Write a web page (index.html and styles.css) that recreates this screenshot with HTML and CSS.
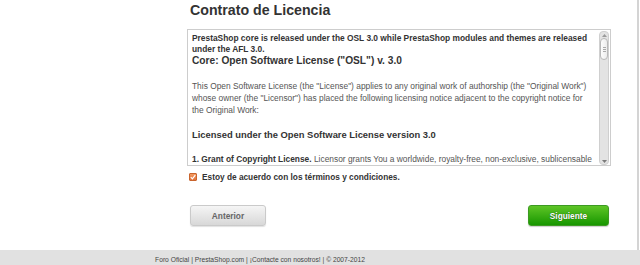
FILE: index.html
```html
<!DOCTYPE html>
<html>
<head>
    <title>Contrato de Licencia</title>
    <link rel="stylesheet" href="styles.css">
</head>
<body>
    <div class="page">
        <div class="content">
            <h2 class="title">Contrato de Licencia</h2>

            <!-- License text with its scrollbar -->
            <div class="license-box">
                <div class="license-text">
                    <div class="intro">PrestaShop core is released under the OSL 3.0 while PrestaShop modules and themes are released under the AFL 3.0.</div>
                    <h1>Core: Open Software License ("OSL") v. 3.0</h1>
                    <p>This Open Software License (the "License") applies to any original work of authorship (the "Original Work") whose owner (the "Licensor") has placed the following licensing notice adjacent to the copyright notice for the Original Work:</p>
                    <h3>Licensed under the Open Software License version 3.0</h3>
                    <p class="grant"><strong>1. Grant of Copyright License.</strong> Licensor grants You a worldwide, royalty-free, non-exclusive, sublicensable license, for the duration of the copyright, to do the following:</p>
                </div>
                <div class="scrollbar">
                    <div class="scroll-btn">
                        <svg width="5" height="3" viewBox="0 0 5 3"><path d="M0 3 L2.5 0 L5 3 Z" fill="#9a9a9a"/></svg>
                    </div>
                    <div class="scroll-thumb">
                        <span></span><span></span><span></span>
                    </div>
                    <div class="scroll-track"></div>
                    <div class="scroll-btn">
                        <svg width="5" height="3" viewBox="0 0 5 3"><path d="M0 0 L2.5 3 L5 0 Z" fill="#7a7a7a"/></svg>
                    </div>
                </div>
            </div>

            <!-- Agreement checkbox -->
            <label class="agree">
                <span class="check">
                    <svg width="6" height="6" viewBox="0 0 6 6"><path d="M0.8 3.2 L2.4 4.8 L5.3 1.2" fill="none" stroke="#fff" stroke-width="1.2"/></svg>
                </span>
                Estoy de acuerdo con los términos y condiciones.
            </label>

            <!-- Navigation buttons -->
            <div class="buttons">
                <button class="btn btn-prev">Anterior</button>
                <button class="btn btn-next">Siguiente</button>
            </div>
        </div>
    </div>

    <div class="footer">
        <a href="#">Foro Oficial</a> | <a href="#">PrestaShop.com</a> | <a href="#">¡Contacte con nosotros!</a> | © 2007-2012
    </div>
</body>
</html>
```
FILE: styles.css
```css
/* Page basics */
body {
    margin: 0;
    font-family: "Liberation Sans", Arial, sans-serif;
    color: #333;
    background-color: #fff;
}

/* White page with the grey edge on the right */
.page {
    width: 637px;
    border-right: 2px solid #d4d4d4;
    padding-bottom: 24px;
}

.content {
    margin-left: 187px;
    width: 424px;
    padding-top: 1px;
}

.title {
    margin: 0 0 10px;
    padding-left: 3px;
    font-size: 14.2px;
    line-height: 18px;
    font-weight: bold;
    color: #333;
}

/* License box */
.license-box {
    display: flex;
    height: 137px;
    border: 1px solid #cdcdcd;
    box-sizing: border-box;
}

.license-text {
    flex: 1;
    overflow: hidden;
    padding: 3px 2px 0 4px;
    color: #555;
}

.license-text .intro {
    font-size: 8.4px;
    line-height: 11px;
    font-weight: bold;
    color: #333;
}

.license-text h1 {
    margin: 0;
    font-size: 10.2px;
    line-height: 11px;
    color: #333;
}

.license-text p {
    margin: 14px 4px 0 0;
    font-size: 8.4px;
    line-height: 12px;
}

.license-text h3 {
    margin: 13px 0 0;
    font-size: 9.4px;
    line-height: 12px;
    color: #333;
}

.license-text .grant {
    margin-top: 12px;
}

.license-text .grant strong {
    color: #333;
}

/* Fake scrollbar */
.scrollbar {
    width: 10px;
    margin: 1px 1px 0 0;
    box-sizing: border-box;
    border: 1px solid #cfcfcf;
    border-radius: 4px;
    background-color: #e3e3e3;
    display: flex;
    flex-direction: column;
    align-items: center;
}

.scroll-btn {
    height: 6px;
    display: flex;
    align-items: center;
    justify-content: center;
}

.scroll-thumb {
    width: 8px;
    height: 22px;
    box-sizing: border-box;
    border: 1px solid #b9b9b9;
    border-radius: 4px;
    background: linear-gradient(to right, #fdfdfd, #ececec);
    display: flex;
    flex-direction: column;
    align-items: center;
    justify-content: center;
    gap: 1px;
}

.scroll-thumb span {
    width: 3px;
    height: 1px;
    background-color: #aaa;
}

.scroll-track {
    flex: 1;
}

/* Agreement row */
.agree {
    display: flex;
    align-items: center;
    gap: 5px;
    margin-top: 5px;
    padding-left: 2px;
    font-size: 8.3px;
    line-height: 12px;
    font-weight: bold;
    color: #333;
}

.check {
    width: 8px;
    height: 8px;
    box-sizing: border-box;
    border: 1px solid #c9642d;
    border-radius: 1px;
    background: linear-gradient(#f39a60, #e0713a);
    display: flex;
    align-items: center;
    justify-content: center;
}

/* Buttons */
.buttons {
    display: flex;
    justify-content: space-between;
    margin-top: 22px;
    padding: 0 2px 0 3px;
}

.btn {
    height: 21px;
    padding: 0;
    border-radius: 3px;
    font-family: "Liberation Sans", Arial, sans-serif;
    font-size: 8.3px;
    font-weight: bold;
    cursor: pointer;
}

.btn-prev {
    width: 76px;
    background: linear-gradient(#f5f5f5, #d8d8d8);
    border: 1px solid #cacaca;
    color: #666;
    box-shadow: 0 1px 1px rgba(0, 0, 0, 0.12);
}

.btn-next {
    width: 81px;
    background: linear-gradient(#5ec526, #179600);
    border: 1px solid #3c9a22;
    color: #fff;
    text-shadow: 0 0 1px rgba(0, 0, 0, 0.6);
    box-shadow: 0 1px 1px rgba(0, 0, 0, 0.2);
}

/* Footer */
.footer {
    background-color: #e1e1e1;
    padding: 5px 120px 10px 0;
    text-align: center;
    font-size: 6.7px;
    line-height: 10px;
    color: #444;
}

.footer a {
    color: #444;
    text-decoration: none;
}
```
